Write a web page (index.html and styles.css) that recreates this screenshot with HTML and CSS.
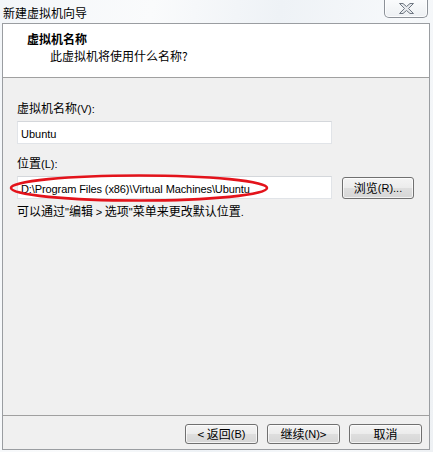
FILE: index.html
```html
<!DOCTYPE html>
<html lang="zh-CN">
<head>
<meta charset="utf-8">
<title>新建虚拟机向导</title>
<link rel="stylesheet" href="styles.css">
</head>
<body>
<div class="window">
  <div class="titlebar">
    <div class="title">新建虚拟机向导</div>
    <div class="close">
      <svg width="15" height="11" viewBox="0 0 15 11"><path d="M0.5 0.5 H4 L7.5 3.5 L11 0.5 H14.5 L9.5 5.5 L14.5 10.5 H11 L7.5 7.5 L4 10.5 H0.5 L5.5 5.5 Z" fill="#e6e9ed" stroke="#6f7782" stroke-width="1" stroke-linejoin="round"/></svg>
    </div>
  </div>
  <div class="client">
    <div class="header">
      <div class="h-title">虚拟机名称</div>
      <div class="h-sub">此虚拟机将使用什么名称?</div>
    </div>
    <div class="content">
      <div class="label">虚拟机名称<span class="lat">(V):</span></div>
      <div class="row">
        <div class="input"><span class="lat">Ubuntu</span></div>
      </div>
      <div class="label label2">位置<span class="lat">(L):</span></div>
      <div class="row">
        <div class="input path-input"><span class="lat path">D:\Program Files (x86)\Virtual Machines\Ubuntu</span>
          <svg class="ring" width="262" height="30" viewBox="0 0 262 30"><ellipse cx="131" cy="15" rx="128" ry="12.5" fill="none" stroke="#e3131b" stroke-width="2.6"/></svg>
        </div>
        <div class="btn browse">浏览<span class="lat">(R)...</span></div>
      </div>
      <div class="hint">可以通过<span class="lat">"</span>编辑 <span class="lat">&gt;</span> 选项<span class="lat">"</span>菜单来更改默认位置<span class="lat">.</span></div>
    </div>
    <div class="footer">
      <div class="btn">&lt; 返回<span class="lat">(B)</span></div>
      <div class="btn">继续<span class="lat">(N)</span> &gt;</div>
      <div class="btn">取消</div>
    </div>
  </div>
</div>
</body>
</html>
```
FILE: styles.css
```css
html, body {
  margin: 0;
  padding: 0;
}
body {
  width: 433px;
  height: 452px;
  overflow: hidden;
  font-family: "Noto Sans CJK SC", "DejaVu Sans", sans-serif;
  font-size: 12px;
  color: #000;
}
.lat {
  font-family: "Liberation Sans", "Noto Sans CJK SC", sans-serif;
  font-size: 11px;
}
.path {
  letter-spacing: -0.1px;
}
.window {
  width: 433px;
  height: 452px;
  display: flex;
  flex-direction: column;
  background: linear-gradient(100deg, #f3f6f9 0%, #fafbfc 30%, #eef2f6 55%, #f7f9fb 80%, #eef1f4 100%);
}
.titlebar {
  height: 23px;
  display: flex;
  align-items: flex-start;
  flex: none;
}
.title {
  padding: 5px 0 0 3px;
  line-height: 16px;
  font-size: 12px;
}
.close {
  margin-left: auto;
  margin-right: 5px;
  margin-top: -1px;
  width: 44px;
  height: 19px;
  box-sizing: border-box;
  border: 1px solid #8c9198;
  border-top: none;
  border-radius: 0 0 5px 5px;
  background: linear-gradient(#fbfcfd, #edf0f3);
  display: flex;
  align-items: center;
  justify-content: center;
  box-shadow: inset 0 0 0 1px rgba(255,255,255,0.8);
}
.close svg {
  display: block;
  margin-top: 1px;
}
.client {
  flex: 1;
  margin: 0 3px 2px 2px;
  border: 1px solid #9a9da1;
  background: #f0f0f0;
  display: flex;
  flex-direction: column;
}
.header {
  height: 53px;
  flex: none;
  background: #fff;
  border-bottom: 1px solid #a0a0a0;
  box-sizing: content-box;
  padding-left: 24px;
}
.h-title {
  font-weight: bold;
  line-height: 16px;
  margin-top: 7px;
}
.h-sub {
  line-height: 16px;
  margin-top: 1px;
  padding-left: 23px;
}
.content {
  flex: 1;
  padding: 22px 0 0 14px;
}
.label {
  line-height: 16px;
}
.label2 {
  margin-top: 11px;
}
.row {
  display: flex;
  align-items: center;
  gap: 10px;
  margin-top: 4px;
}
.input {
  position: relative;
  width: 315px;
  height: 23px;
  box-sizing: border-box;
  background: #fff;
  border: 1px solid #e1e4e8;
  border-top-color: #d4d7db;
  padding: 0 3px;
  line-height: 21px;
}
.ring {
  position: absolute;
  left: -10px;
  top: -4px;
  pointer-events: none;
}
.btn {
  width: 73px;
  height: 20px;
  box-sizing: border-box;
  border: 1px solid #707070;
  border-radius: 3px;
  background: linear-gradient(#f4f4f4 0%, #ececec 48%, #dedede 52%, #d6d6d6 100%);
  box-shadow: inset 0 0 0 1px rgba(255,255,255,0.7);
  display: flex;
  align-items: center;
  justify-content: center;
  line-height: 16px;
}
.browse {
  width: 72px;
  height: 22px;
}
.hint {
  margin-top: 4px;
  line-height: 16px;
}
.footer {
  flex: none;
  height: 34px;
  border-top: 1px solid #a0a0a0;
  display: flex;
  justify-content: flex-end;
  align-items: flex-start;
  gap: 9px;
  padding: 8px 7px 0 0;
  box-sizing: border-box;
}
```
